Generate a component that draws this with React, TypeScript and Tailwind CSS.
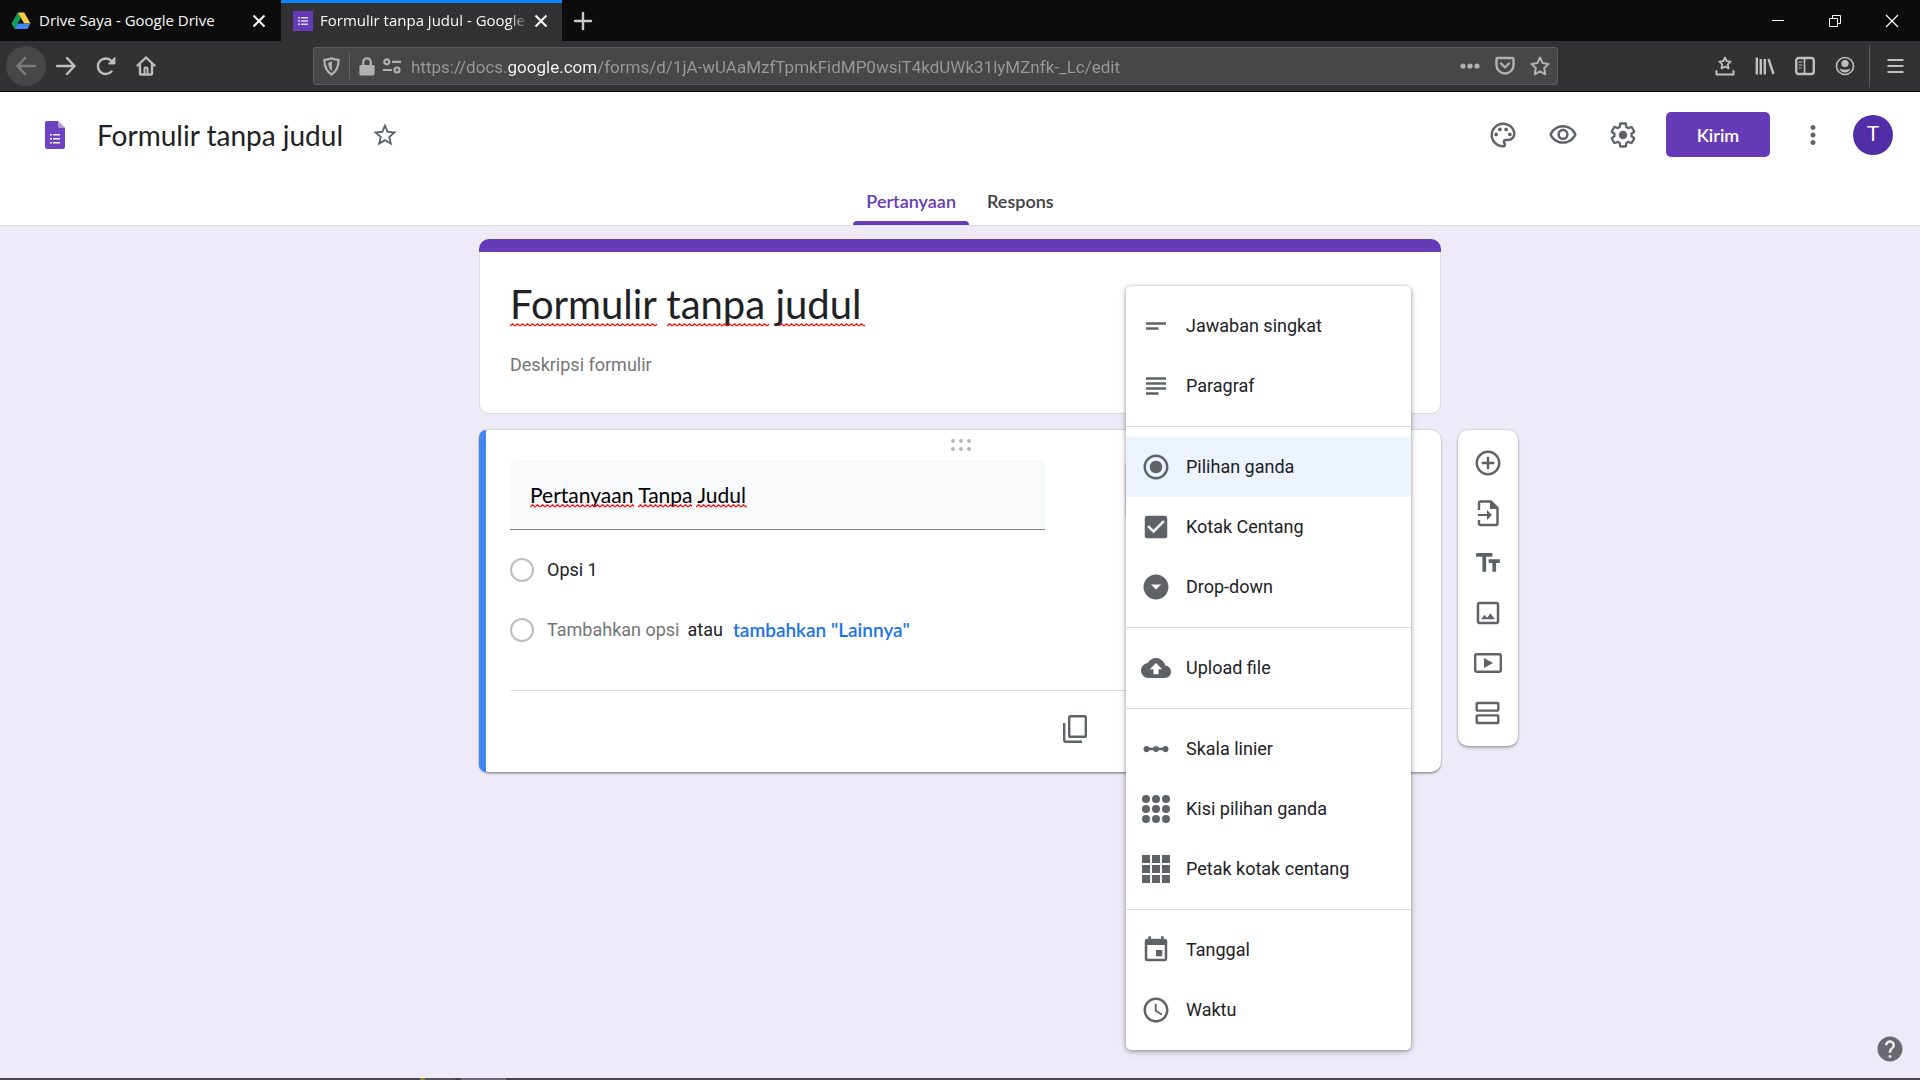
/**
 * Form Editor Page
 * Browser window with the form builder and the question type menu open
 */
import type { ReactNode } from 'react';
import type { IconType } from 'react-icons';
import {
  MdAccessTime,
  MdAddCircleOutline,
  MdArrowDropDownCircle,
  MdCheckBox,
  MdCloudUpload,
  MdCropOriginal,
  MdEvent,
  MdHelp,
  MdLinearScale,
  MdMoreVert,
  MdOutlinePalette,
  MdOutlineVisibility,
  MdRadioButtonChecked,
  MdShortText,
  MdStarBorder,
  MdSubject,
  MdTextFields,
} from 'react-icons/md';

/* ---------- Icons ---------- */

interface IconProps {
  className?: string;
}

function DriveIcon({ className }: IconProps) {
  return (
    <svg viewBox="0 0 20 18" className={className}>
      <path d="M6.8 0.5 L0.5 11.5 L3.6 17 L10 6 Z" fill="#0f9d58" />
      <path d="M6.8 0.5 H13.2 L19.5 11.5 H13.2 Z" fill="#ffcd40" />
      <path d="M6.8 11.5 H19.5 L16.4 17 H3.6 Z" fill="#4285f4" />
    </svg>
  );
}

function FormsFavicon({ className }: IconProps) {
  return (
    <svg viewBox="0 0 20 20" className={className}>
      <path d="M0 0h20v20H0z" fill="#673ab7" />
      <path d="M5 6h2v1.5H5zM5 9.2h2v1.5H5zM5 12.4h2v1.5H5zM8 6h7v1.5H8zM8 9.2h7v1.5H8zM8 12.4h7v1.5H8z" fill="#e1d8f1" />
    </svg>
  );
}

function FormsLogo({ className }: IconProps) {
  return (
    <svg viewBox="0 0 20 28" className={className}>
      <path d="M2 0h11l7 7v19a2 2 0 0 1-2 2H2a2 2 0 0 1-2-2V2a2 2 0 0 1 2-2z" fill="#6f42c1" />
      <path d="M13 0l7 7h-5a2 2 0 0 1-2-2z" fill="#b39ddb" />
      <path d="M5 13h2v1.6H5zM5 17h2v1.6H5zM5 21h2v1.6H5zM8 13h7v1.6H8zM8 17h7v1.6H8zM8 21h7v1.6H8z" fill="#f1edf9" />
    </svg>
  );
}

function CrossIcon({ className }: IconProps) {
  return (
    <svg viewBox="0 0 14 14" className={className} fill="none" stroke="currentColor" strokeWidth="2">
      <path d="M1.5 1.5l11 11M12.5 1.5l-11 11" />
    </svg>
  );
}

function StrokeIcon({ children, className = 'size-5' }: { children: ReactNode; className?: string }) {
  return (
    <svg
      viewBox="0 0 20 20"
      className={className}
      fill="none"
      stroke="currentColor"
      strokeWidth="2.4"
      strokeLinecap="round"
      strokeLinejoin="round"
    >
      {children}
    </svg>
  );
}

function GearIcon({ className }: IconProps) {
  return (
    <svg viewBox="0 0 24 24" className={className}>
      <path
        d="M19.43 12.98c.04-.32.07-.64.07-.98 0-.34-.03-.66-.07-.98l2.11-1.65c.19-.15.24-.42.12-.64l-2-3.46a.5.5 0 0 0-.61-.22l-2.49 1c-.52-.4-1.08-.73-1.69-.98l-.38-2.65A.488.488 0 0 0 14 2h-4c-.25 0-.46.18-.49.42l-.38 2.65c-.61.25-1.17.59-1.69.98l-2.49-1a.5.5 0 0 0-.61.22l-2 3.46c-.13.22-.07.49.12.64l2.11 1.65c-.04.32-.07.65-.07.98 0 .33.03.66.07.98l-2.11 1.65c-.19.15-.24.42-.12.64l2 3.46a.5.5 0 0 0 .61.22l2.49-1c.52.4 1.08.73 1.69.98l.38 2.65c.03.24.24.42.49.42h4c.25 0 .46-.18.49-.42l.38-2.65c.61-.25 1.17-.59 1.69-.98l2.49 1c.23.09.49 0 .61-.22l2-3.46c.12-.22.07-.49-.12-.64l-2.11-1.65z"
        transform="translate(12 12) scale(.92) translate(-12 -12)"
        fill="none"
        stroke="currentColor"
        strokeWidth="2"
      />
      <circle cx="12" cy="12" r="3.4" fill="currentColor" />
    </svg>
  );
}

function DotGridIcon({ className }: IconProps) {
  return (
    <svg viewBox="0 0 30 30" className={className} fill="currentColor">
      {[5, 15, 25].map((y) => [5, 15, 25].map((x) => <circle key={`${x}-${y}`} cx={x} cy={y} r="4" />))}
    </svg>
  );
}

function SquareGridIcon({ className }: IconProps) {
  return (
    <svg viewBox="0 0 30 30" className={className} fill="currentColor">
      {[1, 11, 21].map((y) => [1, 11, 21].map((x) => <rect key={`${x}-${y}`} x={x} y={y} width="8" height="8" />))}
    </svg>
  );
}

function CopyIcon({ className }: IconProps) {
  return (
    <svg viewBox="0 0 30 30" className={className} fill="none" stroke="currentColor" strokeWidth="2.4">
      <rect x="9.2" y="2.2" width="16.6" height="20.6" rx="1.4" />
      <path d="M4.200 9v17.600q0 1.200 1.200 1.200H22" />
    </svg>
  );
}

function ImportIcon({ className }: IconProps) {
  return (
    <svg viewBox="0 0 30 30" className={className}>
      <path d="M6 12V5q0-1.500 1.500-1.500H18L24.500 10v15.500q0 1.500-1.500 1.500H7.500Q6 27 6 25.500V22" fill="none" stroke="currentColor" strokeWidth="2.400" />
      <path d="M17 3l8 8h-8z" fill="currentColor" />
      <path d="M5 16h9v-4l5 5-5 5v-4H5z" fill="currentColor" />
    </svg>
  );
}

function VideoIcon({ className }: IconProps) {
  return (
    <svg viewBox="0 0 30 30" className={className}>
      <rect x="2.200" y="6.200" width="25.600" height="17.600" rx="1.200" fill="none" stroke="currentColor" strokeWidth="2.400" />
      <path d="M11 10v10l9-5z" fill="currentColor" />
    </svg>
  );
}

function SectionIcon({ className }: IconProps) {
  return (
    <svg viewBox="0 0 30 30" className={className} fill="none" stroke="currentColor" strokeWidth="2.400">
      <rect x="3.700" y="5" width="21.600" height="7.600" rx="0.600" />
      <rect x="3.700" y="17.400" width="21.600" height="7.600" rx="0.600" />
    </svg>
  );
}

function Squiggle({ className }: IconProps) {
  return (
    <svg className={className}>
      <defs>
        <pattern id="squiggle" width="5" height="4" patternUnits="userSpaceOnUse">
          <path d="M0 3L2.500 .8L5 3" fill="none" stroke="#f00" strokeWidth="1.100" />
        </pattern>
      </defs>
      <rect width="100%" height="4" fill="url(#squiggle)" />
    </svg>
  );
}

/* ---------- Browser ---------- */

function BrowserTabs() {
  return (
    <div className="flex h-[41px] items-stretch bg-[#0c0c0c] font-['Open_Sans',sans-serif] text-[15px] text-[#f9f9fa]">
      <div className="flex w-[281px] items-center pl-[11px] pr-[15px]">
        <DriveIcon className="h-[18px] w-5" />
        <span className="ml-2 flex-1 whitespace-nowrap">Drive Saya - Google Drive</span>
        <button type="button" aria-label="Tutup tab">
          <CrossIcon className="size-[14px]" />
        </button>
      </div>
      <div className="flex w-[281px] items-center border-t-[3px] border-[#0a84ff] bg-[#323234] pb-[3px] pl-3 pr-[14px]">
        <FormsFavicon className="size-5 shrink-0" />
        <span className="ml-[7px] min-w-0 flex-1 overflow-hidden whitespace-nowrap mask-r-from-90% mask-r-to-100%">
          Formulir tanpa judul - Google Formulir
        </span>
        <button type="button" aria-label="Tutup tab" className="ml-1">
          <CrossIcon className="size-[14px]" />
        </button>
      </div>
      <button type="button" aria-label="Tab baru" className="flex w-[42px] items-center justify-center text-[#c9c9ca]">
        <StrokeIcon className="size-5">
          <path d="M10 2v16M2 10h16" />
        </StrokeIcon>
      </button>
      <div className="flex flex-1 justify-end">
        <button type="button" aria-label="Minimalkan" className="flex w-[57px] items-center justify-center">
          <svg viewBox="0 0 12 12" className="size-3" stroke="currentColor">
            <path d="M0 5.500h12" />
          </svg>
        </button>
        <button type="button" aria-label="Pulihkan" className="flex w-[57px] items-center justify-center">
          <svg viewBox="0 0 12 12" className="size-3" fill="none" stroke="currentColor">
            <path d="M.5 3.500h8v8h-8zM3.500 3.500v-3h8v8h-3" />
          </svg>
        </button>
        <button type="button" aria-label="Tutup" className="flex w-[57px] items-center justify-center">
          <svg viewBox="0 0 14 14" className="size-[14px]" stroke="currentColor" strokeWidth="1.300">
            <path d="M1 1l12 12M13 1L1 13" />
          </svg>
        </button>
      </div>
    </div>
  );
}

function ToolButton({ label, children }: { label: string; children: ReactNode }) {
  return (
    <button type="button" aria-label={label} className="flex size-10 items-center justify-center">
      {children}
    </button>
  );
}

function BrowserToolbar() {
  return (
    <div className="flex h-[51px] items-center border-b border-black bg-[#323234] pl-[6px] text-[#bfbfc0]">
      <button type="button" aria-label="Kembali" className="flex size-10 items-center justify-center rounded-full bg-[#474749] text-[#7c7c7e]">
        <StrokeIcon>
          <path d="M19 10H1.500M9 2L1.500 10L9 18" />
        </StrokeIcon>
      </button>
      <ToolButton label="Maju">
        <StrokeIcon>
          <path d="M1 10h17.500M11 2l7.500 8L11 18" />
        </StrokeIcon>
      </ToolButton>
      <ToolButton label="Muat ulang">
        <StrokeIcon>
          <path d="M15.500 15.500A7.800 7.800 0 1 1 15.500 5" />
          <path d="M19 1.500v6.500h-6.500z" fill="currentColor" strokeWidth="0.800" />
        </StrokeIcon>
      </ToolButton>
      <ToolButton label="Beranda">
        <StrokeIcon>
          <path d="M1.500 9.500L10 1.500L18.500 9.500M4 9v8.500q0 1 1 1h10q1 0 1-1V9" />
          <path d="M8.500 17v-4.500q0-1 1-1h1q1 0 1 1V17" strokeWidth="2" />
        </StrokeIcon>
      </ToolButton>

      {/* Address bar */}
      <div className="mx-[147px] flex h-[38px] flex-1 items-center rounded-[3px] border border-[#5c5c5e] bg-[#474749] text-[#b1b1b3]">
        <span className="flex w-[35px] justify-center">
          <StrokeIcon className="size-[19px]">
            <path d="M10 1.500q4 1.500 7.500 1.500q0 11-7.500 15.500Q2.500 14 2.500 3Q6 3 10 1.500z" />
            <path d="M10 5.500v8.500q-3-2.500-3-7.500z" fill="currentColor" strokeWidth="1" />
          </StrokeIcon>
        </span>
        <span className="h-[26px] w-px bg-[#66666a]" />
        <svg viewBox="0 0 16 20" className="ml-[9px] h-[19px] w-4" fill="none" stroke="currentColor">
          <path d="M4 9V5.500a4 4 0 0 1 8 0V9" strokeWidth="2.400" />
          <rect y="8.500" width="16" height="11" rx="1.500" fill="currentColor" stroke="none" />
        </svg>
        <svg viewBox="0 0 18 16" className="ml-2 h-4 w-[18px]" fill="none" stroke="currentColor" strokeWidth="2.200">
          <circle cx="3.800" cy="3.800" r="2.500" />
          <path d="M9 3.800h9M0 12h9" />
          <circle cx="14" cy="12" r="2.500" />
        </svg>
        <input
          type="text"
          aria-label="Alamat"
          defaultValue="https://docs.google.com/forms/d/1jA-wUAaMzfTpmkFidMP0wsiT4kdUWk31lyMZnfk-_Lc/edit"
          className="ml-[10px] min-w-0 flex-1 bg-[linear-gradient(90deg,#9a9a9c_96px,#f9f9fa_96px,#f9f9fa_186px,#9a9a9c_186px)] bg-clip-text pt-1 font-[Roboto,sans-serif] text-[17px] text-transparent outline-none"
        />
        <button type="button" aria-label="Tindakan halaman" className="flex w-[35px] justify-center">
          <svg viewBox="0 0 20 6" className="h-[6px] w-5" fill="currentColor">
            <circle cx="3" cy="3" r="2.600" />
            <circle cx="10" cy="3" r="2.600" />
            <circle cx="17" cy="3" r="2.600" />
          </svg>
        </button>
        <button type="button" aria-label="Simpan ke Pocket" className="flex w-[35px] justify-center">
          <StrokeIcon>
            <path d="M2.500 2h15q1 0 1 1v6a8.500 8.500 0 0 1-17 0V3q0-1 1-1z" />
            <path d="M6 7.500l4 4 4-4" />
          </StrokeIcon>
        </button>
        <button type="button" aria-label="Markahi halaman" className="flex w-[35px] justify-center">
          <StrokeIcon>
            <path d="M10 1.500l2.600 5.600 6 .8-4.400 4.200 1.100 6.200L10 15.300l-5.300 3 1.100-6.200L1.400 7.900l6-.8z" strokeWidth="2" />
          </StrokeIcon>
        </button>
      </div>

      <ToolButton label="Markah">
        <StrokeIcon>
          <path d="M10 1.500l1.700 3.600 3.900.5-2.800 2.800.7 4L10 10.500l-3.500 1.900.7-4L4.400 5.600l3.900-.5z" strokeWidth="1.800" />
          <path d="M1.500 15v3.500h17V15" strokeWidth="2" />
        </StrokeIcon>
      </ToolButton>
      <ToolButton label="Pustaka">
        <StrokeIcon>
          <path d="M1.800 1.500v17M5.800 3v15.500M9.800 3v15.500M13.500 3l5 15" strokeWidth="2.400" strokeLinecap="butt" />
        </StrokeIcon>
      </ToolButton>
      <ToolButton label="Bilah samping">
        <StrokeIcon>
          <rect x="1.200" y="2" width="17.600" height="16" rx="2.500" />
          <path d="M9.500 2v16" strokeWidth="1.600" />
          <path d="M4 6h3M4 9h3M4 12h2" strokeWidth="1.200" />
        </StrokeIcon>
      </ToolButton>
      <ToolButton label="Akun">
        <StrokeIcon>
          <circle cx="10" cy="10" r="8.500" strokeWidth="1.600" />
          <circle cx="10" cy="7.500" r="3.600" fill="currentColor" stroke="none" />
          <path d="M4.500 12.500q5.500 2.500 11 0q-1.500 4-5.500 4t-5.500-4z" fill="currentColor" stroke="none" />
        </StrokeIcon>
      </ToolButton>
      <span className="ml-1 h-[42px] w-px bg-[#5c5c5e]" />
      <button type="button" aria-label="Menu" className="flex w-[50px] justify-center">
        <StrokeIcon className="h-5 w-[17px]">
          <path d="M1.500 3h17M1.500 10h17M1.500 17h17" />
        </StrokeIcon>
      </button>
    </div>
  );
}

/* ---------- Form editor ---------- */

function HeaderButton({ label, children }: { label: string; children: ReactNode }) {
  return (
    <button type="button" aria-label={label} className="flex size-[60px] items-center justify-center text-[#5f6368]">
      {children}
    </button>
  );
}

function EditorHeader() {
  return (
    <header className="border-b border-[#dadce0] bg-white font-[Lato,sans-serif]">
      <div className="flex h-[85px] items-center pl-[45px] pr-[27px]">
        <FormsLogo className="h-7 w-5" />
        <input
          type="text"
          aria-label="Nama dokumen"
          defaultValue="Formulir tanpa judul"
          className="ml-8 w-[250px] text-[28px] text-[#202124] outline-none"
        />
        <button type="button" aria-label="Beri bintang" className="ml-6 text-[#5f6368]">
          <MdStarBorder className="size-7" />
        </button>
        <div className="ml-auto flex items-center">
          <HeaderButton label="Sesuaikan tema">
            <MdOutlinePalette className="size-[30px]" />
          </HeaderButton>
          <HeaderButton label="Pratinjau">
            <MdOutlineVisibility className="size-[30px]" />
          </HeaderButton>
          <HeaderButton label="Setelan">
            <GearIcon className="size-[30px]" />
          </HeaderButton>
          <button type="button" className="ml-[13px] h-[45px] w-[104px] rounded-[5px] bg-[#673ab7] text-lg font-semibold text-white">
            Kirim
          </button>
          <button type="button" aria-label="Lainnya" className="ml-7 text-[#5f6368]">
            <MdMoreVert className="size-[30px]" />
          </button>
          <button type="button" aria-label="Akun Google" className="ml-[25px] size-10 rounded-full bg-[#512da8] font-[Roboto,sans-serif] text-[21px] text-white">
            T
          </button>
        </div>
      </div>
      <nav className="flex h-12 items-stretch justify-center gap-[5px] text-lg font-semibold">
        <button type="button" className="relative px-[13px] text-[#673ab7]">
          Pertanyaan
          <span className="absolute inset-x-0 bottom-0 h-1 rounded-t bg-[#673ab7]" />
        </button>
        <button type="button" className="px-[13px] text-[#3c4043]">
          Respons
        </button>
      </nav>
    </header>
  );
}

function TitleCard() {
  return (
    <section className="rounded-[10px] border border-t-0 border-[#dadce0] bg-white">
      <div className="-mx-px h-[13px] rounded-t-[10px] bg-[#673ab7]" />
      <div className="px-[30px] pb-[34px] pt-[27px]">
        <div className="relative">
          <input
            type="text"
            aria-label="Judul formulir"
            defaultValue="Formulir tanpa judul"
            className="block h-[50px] w-full font-[Lato,sans-serif] text-[40px] text-[#202124] outline-none"
          />
          <div className="absolute bottom-[2px] left-0 flex gap-[10px]">
            <Squiggle className="h-1 w-[147px]" />
            <Squiggle className="h-1 w-[102px]" />
            <Squiggle className="h-1 w-[86px]" />
          </div>
        </div>
        <input
          type="text"
          aria-label="Deskripsi formulir"
          placeholder="Deskripsi formulir"
          className="mt-5 block h-[30px] w-full text-lg outline-none placeholder:text-[#757575]"
        />
      </div>
    </section>
  );
}

interface QuestionType {
  label: string;
  icon: IconType | ((props: IconProps) => ReactNode);
  selected?: boolean;
}

const questionTypes: QuestionType[][] = [
  [
    { label: 'Jawaban singkat', icon: MdShortText },
    { label: 'Paragraf', icon: MdSubject },
  ],
  [
    { label: 'Pilihan ganda', icon: MdRadioButtonChecked, selected: true },
    { label: 'Kotak Centang', icon: MdCheckBox },
    { label: 'Drop-down', icon: MdArrowDropDownCircle },
  ],
  [{ label: 'Upload file', icon: MdCloudUpload }],
  [
    { label: 'Skala linier', icon: MdLinearScale },
    { label: 'Kisi pilihan ganda', icon: DotGridIcon },
    { label: 'Petak kotak centang', icon: SquareGridIcon },
  ],
  [
    { label: 'Tanggal', icon: MdEvent },
    { label: 'Waktu', icon: MdAccessTime },
  ],
];

function TypeMenu() {
  return (
    <div className="absolute -top-[174px] right-0 z-10 w-[285px] divide-y divide-[#dadce0] rounded-[5px] bg-white shadow-[0_1px_4px_rgba(0,0,0,0.35),0_2px_8px_rgba(0,0,0,0.12)]">
      {questionTypes.map((group, index) => (
        <div key={index} className="py-[10px]">
          {group.map(({ label, icon: Icon, selected }) => (
            <button
              key={label}
              type="button"
              className={`flex h-[60px] w-full items-center gap-[15px] px-[15px] text-lg text-[#202124] ${
                selected ? 'bg-[#ecf3fe]' : ''
              }`}
            >
              <Icon className="size-[30px] text-[#5f6368]" />
              {label}
            </button>
          ))}
        </div>
      ))}
    </div>
  );
}

function QuestionCard() {
  return (
    <section className="flex rounded-[10px] bg-white shadow-[0_0_0_1px_rgba(0,0,0,0.08),0_2px_2px_rgba(0,0,0,0.28)]">
      <div className="w-[7px] rounded-l-[10px] bg-[#4285f4]" />
      <div className="flex-1 pl-6 pr-[30px]">
        <div className="flex h-[30px] items-center justify-center">
          <svg viewBox="0 0 20 12" className="h-3 w-5" fill="#b5b6b8">
            {[2, 10].map((y) => [2, 10, 18].map((x) => <circle key={`${x}-${y}`} cx={x} cy={y} r="2" />))}
          </svg>
        </div>

        <div className="flex items-start gap-20">
          <div className="relative flex-1">
            <input
              type="text"
              aria-label="Pertanyaan"
              defaultValue="Pertanyaan Tanpa Judul"
              className="block h-[70px] w-full rounded-t-[5px] border-b border-[#80868b] bg-[#f8f9fa] px-5 font-[Lato,sans-serif] text-[21px] text-black outline-none"
            />
            <div className="absolute bottom-[22px] left-5 flex gap-1">
              <Squiggle className="h-1 w-[104px]" />
              <Squiggle className="h-1 w-[54px]" />
              <Squiggle className="h-1 w-[51px]" />
            </div>
          </div>
          <div className="relative w-[286px]">
            <button
              type="button"
              aria-label="Jenis pertanyaan"
              aria-haspopup="menu"
              aria-expanded="true"
              className="mt-[2px] block h-14 w-full rounded border border-[#dadce0]"
            />
            <TypeMenu />
          </div>
        </div>

        <div className="mt-[10px] flex h-[60px] items-center text-lg text-[#202124]">
          <input type="radio" name="opsi" aria-label="Opsi 1" className="size-6 appearance-none rounded-full border-2 border-[#bdbdbd]" />
          <input type="text" aria-label="Teks opsi" defaultValue="Opsi 1" className="ml-[13px] w-[400px] outline-none" />
        </div>
        <div className="flex h-[60px] items-center text-lg text-[#202124]">
          <input type="radio" name="opsi" aria-label="Opsi baru" className="size-6 appearance-none rounded-full border-2 border-[#bdbdbd]" />
          <button type="button" className="ml-[13px] text-[#757575]">
            Tambahkan opsi
          </button>
          <span className="ml-2">atau</span>
          <button type="button" className="ml-[10px] font-[Lato,sans-serif] text-[19px] font-semibold text-[#1a73e8]">
            tambahkan "Lainnya"
          </button>
        </div>

        {/* Card actions */}
        <div className="mt-[30px] flex h-[82px] border-t border-[#dadce0]">
          <button type="button" aria-label="Duplikat" className="ml-[550px] h-[76px] text-[#5f6368]">
            <CopyIcon className="size-[30px]" />
          </button>
        </div>
      </div>
    </section>
  );
}

const tools = [
  { label: 'Tambahkan pertanyaan', icon: MdAddCircleOutline },
  { label: 'Impor pertanyaan', icon: ImportIcon },
  { label: 'Tambahkan judul dan deskripsi', icon: MdTextFields },
  { label: 'Tambahkan gambar', icon: MdCropOriginal },
  { label: 'Tambahkan video', icon: VideoIcon },
  { label: 'Tambahkan bagian', icon: SectionIcon },
];

function SideToolbar() {
  return (
    <div className="ml-[17px] flex w-[60px] flex-col items-center rounded-[10px] bg-white py-2 text-[#5f6368] shadow-[0_0_0_1px_rgba(0,0,0,0.08),0_2px_3px_rgba(0,0,0,0.28)]">
      {tools.map(({ label, icon: Icon }) => (
        <button key={label} type="button" aria-label={label} className="flex size-[50px] items-center justify-center">
          <Icon className="size-[30px]" />
        </button>
      ))}
    </div>
  );
}

export default function App() {
  return (
    <div className="flex min-h-screen flex-col bg-[#eeeaf7] font-[Roboto,sans-serif]">
      <BrowserTabs />
      <BrowserToolbar />
      <EditorHeader />

      <main className="grid flex-1 grid-cols-[1fr_minmax(0,962px)_1fr] content-start items-start gap-y-4 pt-[13px]">
        <div className="col-start-2">
          <TitleCard />
        </div>
        <div className="col-start-2">
          <QuestionCard />
        </div>
        <SideToolbar />
      </main>

      <button type="button" aria-label="Bantuan" className="fixed bottom-4 right-[15px] text-[#6b6870]">
        <MdHelp className="size-[30px]" />
      </button>

      {/* Top edge of the taskbar */}
      <footer className="flex h-[2px] bg-[#45434d] pl-[420px]">
        <span className="w-[5px] bg-[#8c8436]" />
        <span className="w-[30px] bg-[#56545e]" />
        <span className="ml-[6px] w-[45px] bg-[#6c6b72]" />
      </footer>
    </div>
  );
}
